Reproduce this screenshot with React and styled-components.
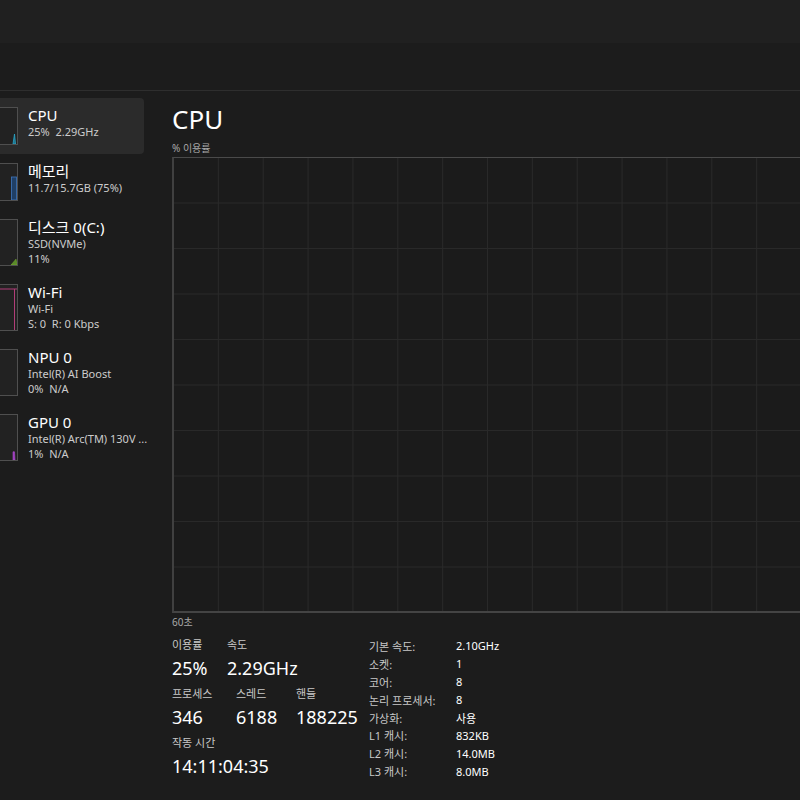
import React from "react";
import styled, { createGlobalStyle } from "styled-components";

const Global = createGlobalStyle`
  html, body { margin: 0; padding: 0; background: #1c1c1c; }
  body {
    font-family: "Segoe UI", "Noto Sans", "Noto Sans CJK KR", sans-serif;
    color: #ffffff;
  }
`;

const Page = styled.div`
  width: 800px;
  height: 800px;
  overflow: hidden;
  display: flex;
  flex-direction: column;
  background: #1c1c1c;
`;

const TitleBar = styled.div`
  height: 43px;
  background: #202020;
  flex: none;
`;

const ToolBar = styled.div`
  height: 47px;
  background: #1c1c1c;
  border-bottom: 1px solid #2e2e2e;
  flex: none;
`;

const Body = styled.div`
  flex: 1;
  display: flex;
  min-height: 0;
`;

const Sidebar = styled.nav`
  width: 144px;
  flex: none;
  padding-top: 7px;
  display: flex;
  flex-direction: column;
`;

const Item = styled.div`
  display: flex;
  gap: 10px;
  padding: 9px 0;
  height: ${(p) => p.$h}px;
  box-sizing: border-box;
  background: ${(p) => (p.$active ? "#2b2b2b" : "transparent")};
  border-radius: 0 4px 4px 0;
`;

const Thumb = styled.div`
  width: 50px;
  margin-left: -32px;
  flex: none;
  box-sizing: border-box;
  border: 1px solid #4f4f4f;
  background: #222222;
  position: relative;
  overflow: hidden;
  svg { position: absolute; inset: 0; width: 100%; height: 100%; }
`;

const ItemText = styled.div`
  display: flex;
  flex-direction: column;
  min-width: 0;
  margin-top: -1px;
  white-space: pre;
`;

const ItemTitle = styled.div`
  font-size: 15px;
  line-height: 18px;
  color: #ffffff;
`;

const ItemSub = styled.div`
  font-size: 11px;
  line-height: 15px;
  color: #cccccc;
`;

const Main = styled.main`
  flex: 1;
  min-width: 0;
  padding: 11px 0 0 28px;
  display: flex;
  flex-direction: column;
  overflow: hidden;
`;

const Heading = styled.h1`
  margin: 0;
  font-size: 26px;
  font-weight: 400;
  line-height: 34px;
  color: #ffffff;
`;

const Caption = styled.div`
  font-size: 10px;
  line-height: 14px;
  color: #a8a8a8;
  margin-top: ${(p) => p.$mt || 0}px;
`;

const Graph = styled.div`
  margin-top: 2px;
  width: 700px;
  height: 456px;
  flex: none;
  box-sizing: border-box;
  border-top: 1px solid #4a4a4a;
  border-left: 2px solid #404040;
  border-bottom: 2px solid #444444;
  background-color: #1b1b1b;
  background-image:
    linear-gradient(to right, #292929 1px, transparent 1px),
    linear-gradient(to bottom, #292929 1px, transparent 1px);
  background-size: 44.86px 45.5px;
  background-position: 43.86px 44.5px;
`;

const Stats = styled.div`
  display: flex;
  margin-top: 7px;
`;

const LeftStats = styled.div`
  width: 197px;
  flex: none;
  display: flex;
  flex-direction: column;
`;

const StatRow = styled.div`
  display: flex;
  margin-bottom: 3px;
`;

const Stat = styled.div`
  width: ${(p) => (p.$w ? p.$w + "px" : "auto")};
  flex: none;
  display: flex;
  flex-direction: column;
  white-space: nowrap;
`;

const StatLabel = styled.div`
  font-size: 11px;
  line-height: 18px;
  color: #c8c8c8;
`;

const StatValue = styled.div`
  font-size: 18px;
  line-height: 28px;
  color: #ffffff;
`;

const Table = styled.div`
  display: grid;
  grid-template-columns: 87px auto;
  grid-auto-rows: 17.9px;
  align-items: center;
  font-size: 11px;
  margin-top: 1px;
`;

const TLabel = styled.div`
  color: #c8c8c8;
  white-space: nowrap;
`;

const TValue = styled.div`
  color: #ffffff;
  white-space: nowrap;
`;

const CpuThumb = () => (
  <svg viewBox="0 0 48 36" preserveAspectRatio="none">
    <path d="M44 36 L45.5 26 L46.5 36 Z" fill="#1f6f88" stroke="#2aa6c8" strokeWidth="0.8" />
  </svg>
);
const MemThumb = () => (
  <svg viewBox="0 0 48 36" preserveAspectRatio="none">
    <rect x="42.5" y="13" width="5" height="23" fill="#1f3f66" stroke="#3f78c0" strokeWidth="0.8" />
  </svg>
);
const DiskThumb = () => (
  <svg viewBox="0 0 48 46" preserveAspectRatio="none">
    <path d="M42 46 L47 40 L48 46 Z" fill="#5a8a2a" stroke="#78b030" strokeWidth="0.6" />
  </svg>
);
const WifiThumb = () => (
  <svg viewBox="0 0 48 44" preserveAspectRatio="none">
    <path d="M0 4 L48 4 M45.5 4 L45.5 44" stroke="#b23d78" strokeWidth="1" fill="none" />
  </svg>
);
const EmptyThumb = () => null;
const GpuThumb = () => (
  <svg viewBox="0 0 48 44" preserveAspectRatio="none">
    <path d="M44 44 L44 36 L45.5 36 L46 44 Z" fill="#9a3bb8" stroke="#b04cd0" strokeWidth="0.6" />
  </svg>
);

const items = [
  { title: "CPU", subs: ["25%  2.29GHz"], h: 56, active: true, Icon: CpuThumb },
  { title: "메모리", subs: ["11.7/15.7GB (75%)"], h: 56, Icon: MemThumb },
  { title: "디스크 0(C:)", subs: ["SSD(NVMe)", "11%"], h: 65, Icon: DiskThumb },
  { title: "Wi-Fi", subs: ["Wi-Fi", "S: 0  R: 0 Kbps"], h: 65, Icon: WifiThumb },
  { title: "NPU 0", subs: ["Intel(R) AI Boost", "0%  N/A"], h: 65, Icon: EmptyThumb },
  { title: "GPU 0", subs: ["Intel(R) Arc(TM) 130V ...", "1%  N/A"], h: 65, Icon: GpuThumb },
];

const specs = [
  ["기본 속도:", "2.10GHz"],
  ["소켓:", "1"],
  ["코어:", "8"],
  ["논리 프로세서:", "8"],
  ["가상화:", "사용"],
  ["L1 캐시:", "832KB"],
  ["L2 캐시:", "14.0MB"],
  ["L3 캐시:", "8.0MB"],
];

export default function App() {
  return (
    <Page>
      <Global />
      <TitleBar />
      <ToolBar />
      <Body>
        <Sidebar>
          {items.map(({ title, subs, h, active, Icon }) => (
            <Item key={title} $h={h} $active={active}>
              <Thumb>
                <Icon />
              </Thumb>
              <ItemText>
                <ItemTitle>{title}</ItemTitle>
                {subs.map((s) => (
                  <ItemSub key={s}>{s}</ItemSub>
                ))}
              </ItemText>
            </Item>
          ))}
        </Sidebar>
        <Main>
          <Heading>CPU</Heading>
          <Caption $mt={5}>% 이용률</Caption>
          <Graph />
          <Caption $mt={2}>60초</Caption>
          <Stats>
            <LeftStats>
              <StatRow>
                <Stat $w={55}>
                  <StatLabel>이용률</StatLabel>
                  <StatValue>25%</StatValue>
                </Stat>
                <Stat>
                  <StatLabel>속도</StatLabel>
                  <StatValue>2.29GHz</StatValue>
                </Stat>
              </StatRow>
              <StatRow>
                <Stat $w={64}>
                  <StatLabel>프로세스</StatLabel>
                  <StatValue>346</StatValue>
                </Stat>
                <Stat $w={60}>
                  <StatLabel>스레드</StatLabel>
                  <StatValue>6188</StatValue>
                </Stat>
                <Stat>
                  <StatLabel>핸들</StatLabel>
                  <StatValue>188225</StatValue>
                </Stat>
              </StatRow>
              <StatRow>
                <Stat>
                  <StatLabel>작동 시간</StatLabel>
                  <StatValue>14:11:04:35</StatValue>
                </Stat>
              </StatRow>
            </LeftStats>
            <Table>
              {specs.map(([k, v]) => (
                <React.Fragment key={k}>
                  <TLabel>{k}</TLabel>
                  <TValue>{v}</TValue>
                </React.Fragment>
              ))}
            </Table>
          </Stats>
        </Main>
      </Body>
    </Page>
  );
}
